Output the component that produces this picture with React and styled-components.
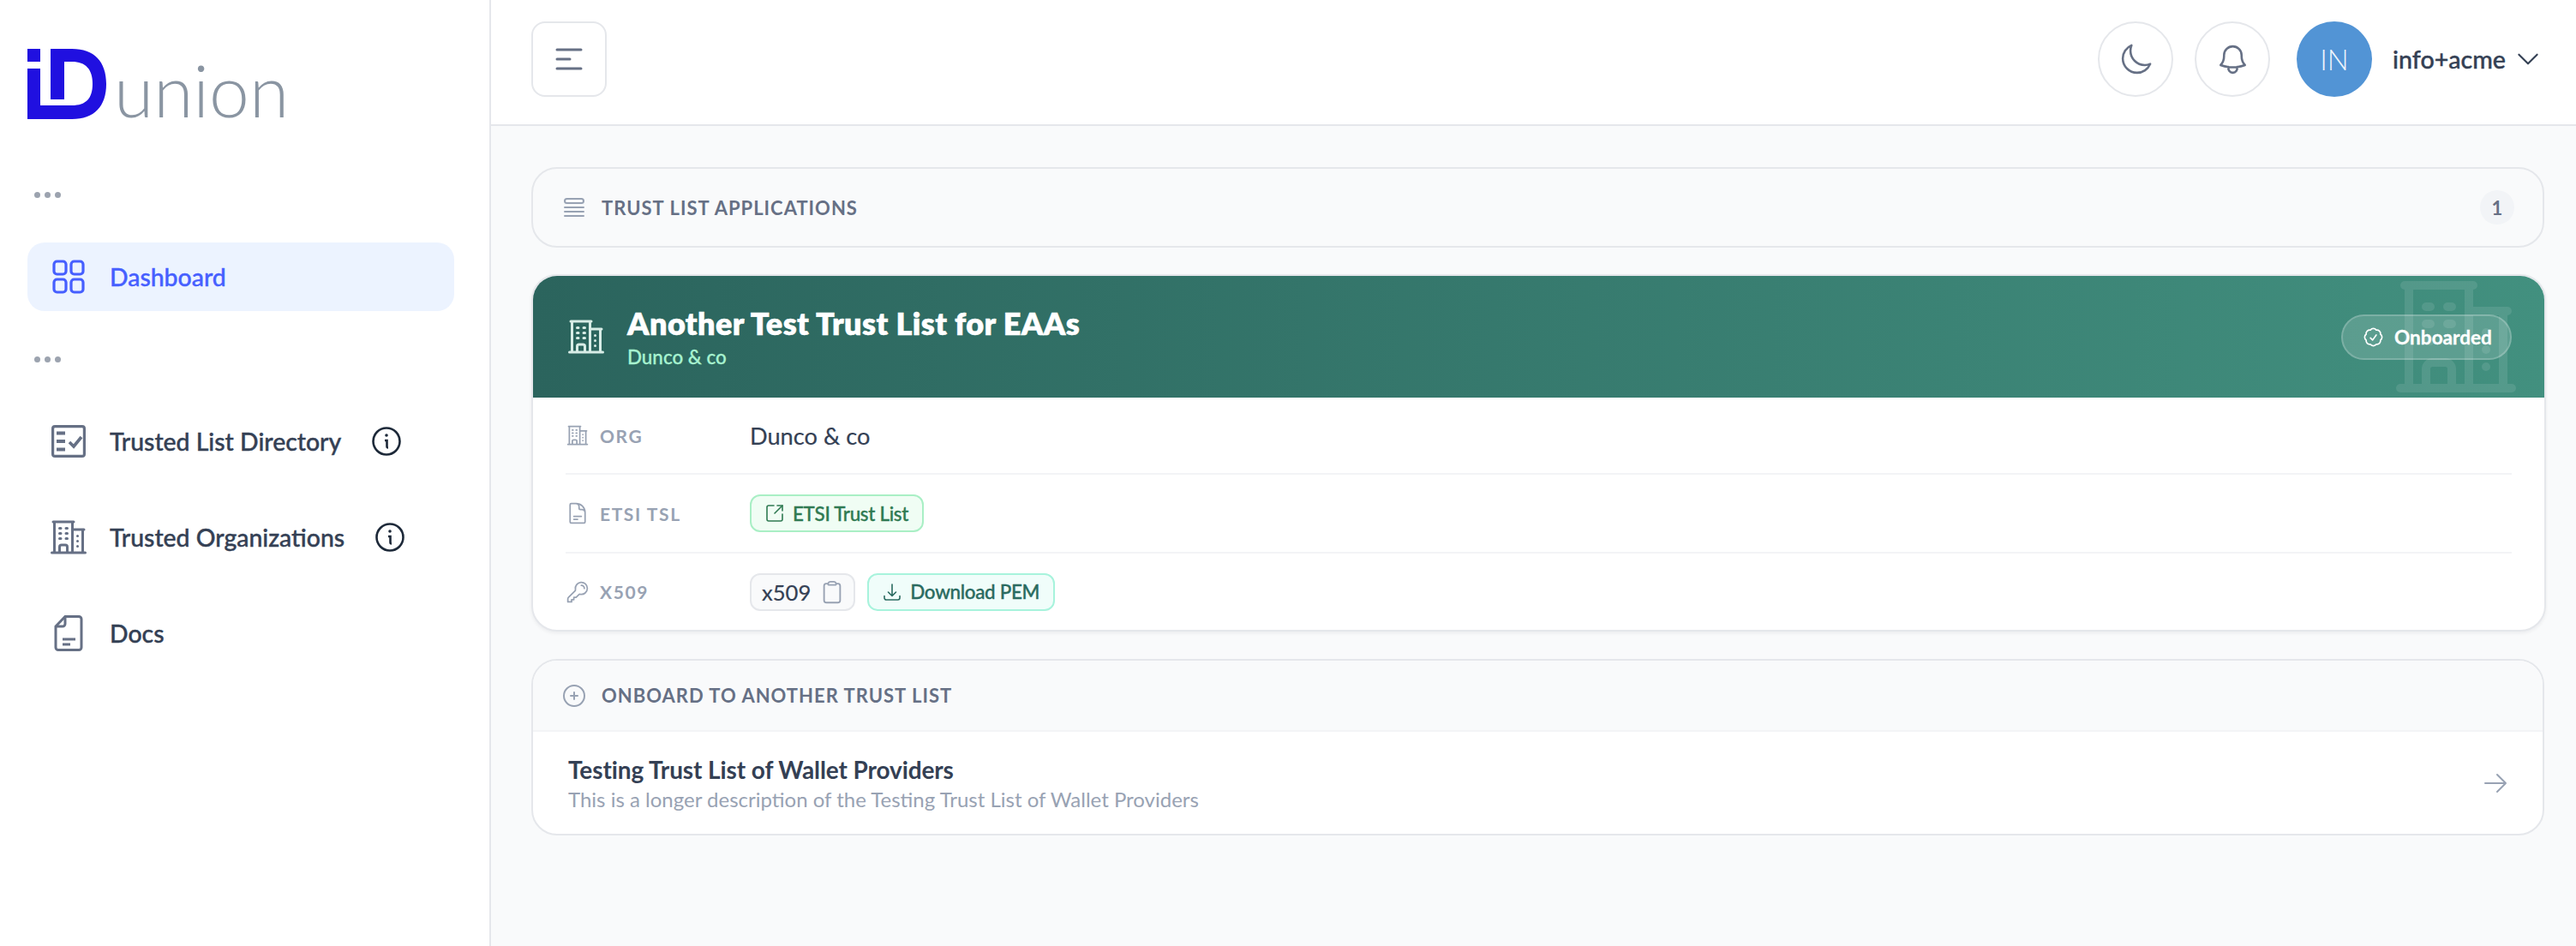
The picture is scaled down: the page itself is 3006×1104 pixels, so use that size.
import React from 'react';
import styled, { createGlobalStyle } from 'styled-components';
import {
  HiOutlineArrowDownTray,
  HiOutlineArrowRight,
  HiOutlineBell,
  HiOutlineBuildingOffice2,
  HiOutlineCheckBadge,
  HiOutlineChevronDown,
  HiOutlineClipboard,
  HiOutlineDocumentText,
  HiOutlineKey,
  HiOutlineMoon,
  HiOutlinePlusCircle,
  HiOutlineQueueList,
} from 'react-icons/hi2';
import { LuSquareArrowOutUpRight } from 'react-icons/lu';

const GlobalStyle = createGlobalStyle`
  html, body {
    margin: 0;
    padding: 0;
    background: #f9fafb;
  }
  body {
    font-family: Lato, "Open Sans", sans-serif;
    color: #344054;
  }
  * {
    box-sizing: border-box;
  }
`;

const Page = styled.div`
  display: flex;
  min-height: 1104px;
`;

const Sidebar = styled.aside`
  width: 573px;
  flex: none;
  background: #fff;
  border-right: 2px solid #e5e7eb;
  padding: 57px 41px 0 32px;
`;

const Logo = styled.div`
  display: flex;
  align-items: flex-end;
  height: 82px;
  gap: 8px;
`;

const LogoText = styled.span`
  font-size: 84px;
  font-weight: 300;
  line-height: 82px;
  color: #8a95a2;
  height: 82px;
  transform: translateY(7px);
`;

const Dots = styled.div`
  display: flex;
  align-items: center;
  gap: 5px;
  height: 24px;
  padding-left: 8px;
  margin: ${p => (p.$first ? '76px' : '44px')} 0 44px;
`;

const Dot = styled.i`
  width: 7px;
  height: 7px;
  border-radius: 50%;
  background: #9ca3af;
`;

const NavList = styled.nav`
  display: flex;
  flex-direction: column;
  gap: 32px;
`;

const NavItem = styled.a`
  display: flex;
  align-items: center;
  height: 80px;
  border-radius: 20px;
  padding-left: 28px;
  gap: 28px;
  font-size: 28.4px;
  font-weight: 500;
  -webkit-text-stroke: 0.4px currentColor;
  color: ${p => (p.$active ? '#465fff' : '#344054')};
  background: ${p => (p.$active ? '#ecf3ff' : 'transparent')};
  svg.nav-icon {
    width: 40px;
    height: 44px;
    flex: none;
    color: ${p => (p.$active ? '#465fff' : '#667085')};
  }
  svg.nav-building {
    width: 48px;
    height: 48px;
    margin: 0 -4px;
    flex: none;
    color: #667085;
  }
`;

const InfoMark = styled.svg`
  width: 34px;
  height: 38px;
  margin-left: 8px;
  color: #1d2939;
`;

const Main = styled.div`
  flex: 1;
  min-width: 0;
  display: flex;
  flex-direction: column;
`;

const TopBar = styled.header`
  height: 147px;
  background: #fff;
  border-bottom: 2px solid #e5e7eb;
  display: flex;
  align-items: flex-start;
  justify-content: space-between;
  padding: 25px 39px 0 47px;
`;

const MenuButton = styled.button`
  width: 88px;
  height: 88px;
  background: #fff;
  border: 2px solid #e5e7eb;
  border-radius: 16px;
  padding: 0;
  display: flex;
  align-items: center;
  justify-content: center;
  color: #667085;
`;

const TopActions = styled.div`
  display: flex;
  align-items: center;
  height: 88px;
`;

const RoundButton = styled.button`
  width: 88px;
  height: 88px;
  border-radius: 50%;
  background: #fff;
  border: 2px solid #e5e7eb;
  padding: 0;
  margin-right: 25px;
  display: flex;
  align-items: center;
  justify-content: center;
  color: #667085;
  font-size: 41px;
`;

const Avatar = styled.div`
  width: 88px;
  height: 88px;
  border-radius: 50%;
  background: #5294d5;
  color: #eef5fc;
  font-size: 33px;
  font-weight: 300;
  display: flex;
  align-items: center;
  justify-content: center;
  margin: 0 24px 0 6px;
`;

const UserName = styled.span`
  font-size: 28.6px;
  font-weight: 500;
  -webkit-text-stroke: 0.4px currentColor;
  color: #344054;
`;

const Caret = styled(HiOutlineChevronDown)`
  font-size: 34px;
  margin-left: 9px;
  color: #344054;
`;

const Content = styled.main`
  flex: 1;
  background: #f9fafb;
  padding: 48px 37px 0 47px;
  display: flex;
  flex-direction: column;
`;

const CollapsedBar = styled.section`
  height: 94px;
  border: 2px solid #e5e7eb;
  border-radius: 30px;
  background: #f9fafb;
  display: flex;
  align-items: center;
  justify-content: space-between;
  padding: 0 33px 0 32px;
`;

const SectionTitle = styled.h2`
  margin: 0;
  display: flex;
  align-items: center;
  gap: 16px;
  font-size: 22px;
  font-weight: 700;
  letter-spacing: 1px;
  color: #667085;
  text-transform: uppercase;
  svg {
    font-size: 32px;
    color: #98a2b3;
  }
`;

const CountBadge = styled.span`
  width: 40px;
  height: 40px;
  border-radius: 50%;
  background: #f2f4f7;
  color: #667085;
  font-size: 22px;
  font-weight: 700;
  display: flex;
  align-items: center;
  justify-content: center;
`;

const TrustCard = styled.article`
  margin: 31px -2px 0 0;
  border: 2px solid #e5e7eb;
  border-radius: 30px;
  background: #fff;
  box-shadow: 0 2px 4px rgba(16, 24, 40, 0.06);
  overflow: hidden;
`;

const CardHead = styled.div`
  position: relative;
  height: 142px;
  background: linear-gradient(90deg, #2b645d 0%, #42907f 100%);
  display: flex;
  align-items: center;
  justify-content: space-between;
  padding: 0 38px 0 38px;
  overflow: hidden;
`;

const HeadLeft = styled.div`
  display: flex;
  align-items: center;
  gap: 24px;
  color: #fff;
`;

const HeadIcon = styled(HiOutlineBuildingOffice2)`
  font-size: 48px;
  color: #d7ece6;
`;

const HeadTitle = styled.div`
  font-size: 36px;
  font-weight: 800;
  line-height: 44px;
  letter-spacing: 0.4px;
  -webkit-text-stroke: 0.5px currentColor;
  color: #fff;
`;

const HeadSub = styled.div`
  margin-top: 3px;
  font-size: 22.4px;
  font-weight: 500;
  line-height: 30px;
  -webkit-text-stroke: 0.3px currentColor;
  color: #a7f3d0;
`;

const Watermark = styled(HiOutlineBuildingOffice2)`
  position: absolute;
  right: 23px;
  top: -9px;
  width: 160px;
  height: 160px;
  color: rgba(255, 255, 255, 0.1);
`;

const StatusPill = styled.div`
  position: relative;
  display: flex;
  align-items: center;
  gap: 11px;
  height: 53px;
  width: 199px;
  padding-left: 22px;
  border-radius: 27px;
  background: rgba(255, 255, 255, 0.15);
  border: 2px solid rgba(255, 255, 255, 0.2);
  color: #fff;
  font-size: 22.6px;
  font-weight: 700;
  -webkit-text-stroke: 0.3px currentColor;
  svg {
    font-size: 27px;
    -webkit-text-stroke: 0;
  }
`;

const CardBody = styled.div`
  padding: 0 38px 0 38px;
`;

const FieldRow = styled.div`
  display: flex;
  align-items: center;
  height: ${p => p.$h}px;
  border-top: ${p => (p.$first ? 'none' : '2px solid #f3f4f6')};
`;

const FieldLabel = styled.div`
  width: 215px;
  flex: none;
  display: flex;
  align-items: center;
  gap: 12px;
  font-size: 21px;
  font-weight: 700;
  letter-spacing: 1.6px;
  color: #98a2b3;
  svg {
    font-size: 28px;
  }
`;

const FieldValue = styled.div`
  display: flex;
  align-items: center;
  gap: 14px;
  font-size: 27.2px;
  -webkit-text-stroke: 0.2px currentColor;
  color: #344054;
`;

const LinkChip = styled.a`
  display: flex;
  align-items: center;
  gap: 9px;
  height: 44px;
  padding: 0 16px 0 15px;
  border-radius: 12px;
  border: 2px solid ${p => p.$border};
  background: ${p => p.$bg};
  color: ${p => p.$color};
  font-size: 22.4px;
  font-weight: 500;
  letter-spacing: -0.3px;
  -webkit-text-stroke: 0.35px currentColor;
  svg {
    font-size: 24px;
    stroke-width: 1.6;
    -webkit-text-stroke: 0;
  }
`;

const CodeChip = styled.span`
  display: flex;
  align-items: center;
  gap: 10px;
  height: 44px;
  padding: 0 10px 0 12px;
  border-radius: 12px;
  border: 2px solid #e5e7eb;
  background: #f9fafb;
  font-size: 25.6px;
  color: #344054;
  svg {
    font-size: 30px;
    color: #98a2b3;
    -webkit-text-stroke: 0;
  }
`;

const OnboardCard = styled.section`
  margin-top: 32px;
  height: 206px;
  border: 2px solid #e5e7eb;
  border-radius: 30px;
  overflow: hidden;
  background: #fff;
`;

const OnboardHead = styled.div`
  height: 83px;
  background: #f9fafb;
  border-bottom: 2px solid #f3f4f6;
  display: flex;
  align-items: center;
  padding-left: 32px;
`;

const OnboardRow = styled.div`
  height: 121px;
  display: flex;
  align-items: center;
  justify-content: space-between;
  padding: 0 39px 2px 41px;
`;

const OptionName = styled.div`
  font-size: 28px;
  font-weight: 700;
  line-height: 36px;
  letter-spacing: -0.1px;
  color: #344054;
`;

const OptionText = styled.div`
  margin-top: 2px;
  font-size: 24px;
  line-height: 30px;
  color: #98a2b3;
`;

const GoArrow = styled(HiOutlineArrowRight)`
  font-size: 32px;
  color: #98a2b3;
`;

function LogoMark() {
  return (
    <svg width="93" height="82" viewBox="0 0 93 82" fill="#2010e0">
      <rect x="0" y="0" width="15" height="15" />
      <path d="M0 23H15V66H52C68 66 76 58 76 41C76 24 68 15 52 15H43V59H27V0H52C78 0 92 15 92 41C92 67 78 82 52 82H0Z" />
    </svg>
  );
}

function GridIcon() {
  return (
    <svg className="nav-icon" viewBox="0 0 40 44" fill="none" stroke="currentColor" strokeWidth="3.2">
      <rect x="3" y="4" width="14" height="15" rx="3.5" />
      <rect x="23" y="4" width="14" height="15" rx="3.5" />
      <rect x="3" y="25" width="14" height="15" rx="3.5" />
      <rect x="23" y="25" width="14" height="15" rx="3.5" />
    </svg>
  );
}

function ChecklistIcon() {
  return (
    <svg className="nav-icon" viewBox="0 0 40 44" fill="none" stroke="currentColor" strokeWidth="3.2">
      <rect x="1.6" y="4.6" width="36.8" height="34.8" rx="2.5" />
      <path d="M6 12.5h10M6 22h10M6 31.5h10" strokeWidth="4" />
      <path d="M21 23l5 5 9-11" strokeWidth="3.6" />
    </svg>
  );
}

function DocIcon() {
  return (
    <svg className="nav-icon" viewBox="0 0 40 44" fill="none" stroke="currentColor" strokeWidth="3">
      <path d="M16 2.5h16a3 3 0 0 1 3 3v33a3 3 0 0 1-3 3H8a3 3 0 0 1-3-3V14z" />
      <path d="M16 2.5V11a3 3 0 0 1-3 3H5" />
      <path d="M13 29h15M13 35h9" />
    </svg>
  );
}

function InfoIcon() {
  return (
    <InfoMark viewBox="0 0 34 38" fill="none" stroke="currentColor" strokeWidth="2.6">
      <circle cx="17" cy="19" r="15.5" />
      <circle cx="17" cy="12" r="1.8" fill="currentColor" stroke="none" />
      <path d="M15 18h2.5v7c0 1 .5 1.5 1.5 1.5" />
    </InfoMark>
  );
}

const MenuIcon = () => (
  <svg width="32" height="28" viewBox="0 0 32 28" fill="none" stroke="currentColor" strokeWidth="3" strokeLinecap="round">
    <path d="M2 3h28M2 14h15M2 25h28" />
  </svg>
);

const navMain = [
  { label: 'Trusted List Directory', icon: <ChecklistIcon />, info: true },
  { label: 'Trusted Organizations', icon: <HiOutlineBuildingOffice2 className="nav-building" />, info: true },
  { label: 'Docs', icon: <DocIcon /> },
];

export default function App() {
  return (
    <>
      <GlobalStyle />
      <Page>
        <Sidebar>
          <Logo>
            <LogoMark />
            <LogoText>union</LogoText>
          </Logo>
          <Dots $first>
            <Dot />
            <Dot />
            <Dot />
          </Dots>
          <NavItem $active>
            <GridIcon />
            Dashboard
          </NavItem>
          <Dots>
            <Dot />
            <Dot />
            <Dot />
          </Dots>
          <NavList>
            {navMain.map(item => (
              <NavItem key={item.label}>
                {item.icon}
                {item.label}
                {item.info && <InfoIcon />}
              </NavItem>
            ))}
          </NavList>
        </Sidebar>
        <Main>
          <TopBar>
            <MenuButton>
              <MenuIcon />
            </MenuButton>
            <TopActions>
              <RoundButton>
                <HiOutlineMoon />
              </RoundButton>
              <RoundButton>
                <HiOutlineBell />
              </RoundButton>
              <Avatar>IN</Avatar>
              <UserName>info+acme</UserName>
              <Caret />
            </TopActions>
          </TopBar>
          <Content>
            <CollapsedBar>
              <SectionTitle>
                <HiOutlineQueueList />
                Trust List Applications
              </SectionTitle>
              <CountBadge>1</CountBadge>
            </CollapsedBar>
            <TrustCard>
              <CardHead>
                <Watermark />
                <HeadLeft>
                  <HeadIcon />
                  <div>
                    <HeadTitle>Another Test Trust List for EAAs</HeadTitle>
                    <HeadSub>Dunco &amp; co</HeadSub>
                  </div>
                </HeadLeft>
                <StatusPill>
                  <HiOutlineCheckBadge />
                  Onboarded
                </StatusPill>
              </CardHead>
              <CardBody>
                <FieldRow $first $h={88}>
                  <FieldLabel>
                    <HiOutlineBuildingOffice2 />
                    ORG
                  </FieldLabel>
                  <FieldValue>Dunco &amp; co</FieldValue>
                </FieldRow>
                <FieldRow $h={92}>
                  <FieldLabel>
                    <HiOutlineDocumentText />
                    ETSI TSL
                  </FieldLabel>
                  <FieldValue>
                    <LinkChip $border="#a9efc5" $bg="#f0fdf4" $color="#2f7a52">
                      <LuSquareArrowOutUpRight />
                      ETSI Trust List
                    </LinkChip>
                  </FieldValue>
                </FieldRow>
                <FieldRow $h={91}>
                  <FieldLabel>
                    <HiOutlineKey />
                    X509
                  </FieldLabel>
                  <FieldValue>
                    <CodeChip>
                      x509
                      <HiOutlineClipboard />
                    </CodeChip>
                    <LinkChip $border="#a7f3dc" $bg="#f0fdfa" $color="#2a6b60">
                      <HiOutlineArrowDownTray />
                      Download PEM
                    </LinkChip>
                  </FieldValue>
                </FieldRow>
              </CardBody>
            </TrustCard>
            <OnboardCard>
              <OnboardHead>
                <SectionTitle>
                  <HiOutlinePlusCircle />
                  Onboard to another Trust List
                </SectionTitle>
              </OnboardHead>
              <OnboardRow>
                <div>
                  <OptionName>Testing Trust List of Wallet Providers</OptionName>
                  <OptionText>This is a longer description of the Testing Trust List of Wallet Providers</OptionText>
                </div>
                <GoArrow />
              </OnboardRow>
            </OnboardCard>
          </Content>
        </Main>
      </Page>
    </>
  );
}
